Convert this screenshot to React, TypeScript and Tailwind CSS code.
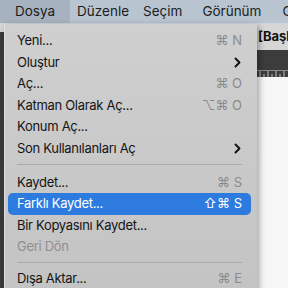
import React from "react";

const Chevron = () => (
  <svg width="7" height="11" viewBox="0 0 7 11" className="mr-[1px]">
    <path d="M1.5 1.5 L5.5 5.5 L1.5 9.5" fill="none" stroke="#111" strokeWidth="1.9" strokeLinecap="round" strokeLinejoin="round" />
  </svg>
);

type Item =
  | { kind: "item"; label: string; sc?: string; sub?: boolean; active?: boolean; disabled?: boolean }
  | { kind: "sep"; short?: boolean };

const items: Item[] = [
  { kind: "item", label: "Yeni...", sc: "⌘ N" },
  { kind: "item", label: "Oluştur", sub: true },
  { kind: "item", label: "Aç...", sc: "⌘ O" },
  { kind: "item", label: "Katman Olarak Aç...", sc: "⌥⌘ O" },
  { kind: "item", label: "Konum Aç..." },
  { kind: "item", label: "Son Kullanılanları Aç", sub: true },
  { kind: "sep" },
  { kind: "item", label: "Kaydet...", sc: "⌘ S" },
  { kind: "item", label: "Farklı Kaydet...", sc: "⇧⌘ S", active: true },
  { kind: "item", label: "Bir Kopyasını Kaydet..." },
  { kind: "item", label: "Geri Dön", disabled: true },
  { kind: "sep", short: true },
  { kind: "item", label: "Dışa Aktar...", sc: "⌘ E" },
];

export default function App() {
  return (
    <div
      className="relative w-[288px] h-[288px] overflow-hidden bg-[#f3f3f3] text-[13px]"
      style={{ fontFamily: "Inter, 'Noto Sans', 'DejaVu Sans', sans-serif" }}
    >
      {/* menu bar */}
      <div className="flex h-[24px] items-center bg-[#b8c4d0] text-[#1c1c1c] text-[13.5px] border-b border-[#d0d6dc] whitespace-nowrap">
        <div className="h-full flex items-center px-[15px] bg-[#a6b2bf]">Dosya</div>
        <div className="ml-[7px]">Düzenle</div>
        <div className="ml-[14px]">Seçim</div>
        <div className="ml-[20px]">Görünüm</div>
        <div className="ml-[21px]">Gö</div>
      </div>
      {/* background app */}
      <div className="flex">
        <div className="w-[4px] flex flex-col">
          <div className="h-[8px] bg-[#d4d4d4]" />
          <div className="h-[260px] bg-[#3a3a3a]" />
        </div>
        <div className="flex-1 flex flex-col">
          <div className="h-[26px] bg-[#d6d6d6] flex items-center justify-end">
            <span className="font-bold text-[13px] text-[#111] whitespace-nowrap w-[30px]">[Başl</span>
          </div>
          <div className="h-[20px] bg-[#3c3c3c]" />
          <div className="h-[7px] bg-[#3c3c3c] border-t border-[#8a8a8a] flex items-end justify-end">
            <svg width="30" height="6">
              {[2, 6, 10, 14, 18, 22, 26].map((x) => (
                <line key={x} x1={x} y1={x % 8 === 2 ? 0 : 3} x2={x} y2={6} stroke="#bdbdbd" strokeWidth="1" />
              ))}
            </svg>
          </div>
          <div className="flex-1 bg-[#f6f6f6]" />
        </div>
      </div>

      {/* dropdown menu */}
      <div className="absolute left-[4px] top-[24px] w-[253px] h-[280px] rounded-b-[6px] bg-gradient-to-b from-[#cfcfcf] to-[#c3c3c3] shadow-[2px_2px_6px_rgba(0,0,0,0.35)] border-l border-[#e0e0e0] pt-[6px] pl-[3px] pr-[6px] tracking-[-0.3px] whitespace-nowrap">
        {items.map((it, i) =>
          it.kind === "sep" ? (
            <div key={i} className={(it.short ? "h-[10px] pt-[4px]" : "h-[12px] pt-[4px]") + " px-[9px]"}>
              <div className="h-px bg-[#a9a9a9]" />
            </div>
          ) : (
            <div
              key={i}
              className={
                "h-[21.6px] flex items-center justify-between px-[9px] rounded-[5px] " +
                (it.active ? "bg-[#2e7be0] text-white" : it.disabled ? "text-[#8f8f8f]" : "text-[#151515]")
              }
            >
              <span>{it.label}</span>
              {it.sc && (
                <span className={"tracking-normal " + (it.active ? "text-white" : "text-[#8a8a8a]")}>{it.sc}</span>
              )}
              {it.sub && <Chevron />}
            </div>
          )
        )}
      </div>
    </div>
  );
}
